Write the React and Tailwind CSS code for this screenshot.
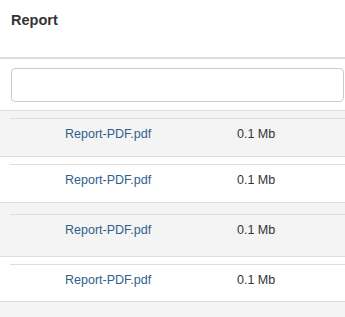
const files = [
  { name: 'Report-PDF.pdf', size: '0.1 Mb', row: 'h-[46px] bg-[#f4f4f4]', inner: 'mt-[7px]' },
  { name: 'Report-PDF.pdf', size: '0.1 Mb', row: 'h-[46px] bg-white', inner: 'mt-[7px]' },
  { name: 'Report-PDF.pdf', size: '0.1 Mb', row: 'h-[54px] bg-[#f4f4f4]', inner: 'mt-[11px]' },
  { name: 'Report-PDF.pdf', size: '0.1 Mb', row: 'h-[45px] bg-white', inner: 'mt-[7px]' },
]

const App = () => {
  return (
    <div className="w-[345px] h-[317px] overflow-hidden bg-[#f4f4f4] font-['Liberation_Sans',Arial,sans-serif] text-[#333]">
      {/* Header */}
      <div className="h-[59px] bg-white border-b-2 border-[#dcdcdc] px-[11px] pt-[10px]">
        <h2 className="text-[14.5px] leading-[20px] font-bold">Report</h2>
      </div>

      {/* Search */}
      <div className="bg-white pl-[11px] pr-[1px] pt-[9px] pb-[8px]">
        <input
          type="text"
          className="block w-full h-[34px] border border-[#cccccc] rounded-[4px] bg-white outline-none"
        />
      </div>

      {/* File rows */}
      <div>
        {files.map((f, i) => (
          <div key={i} className={`border-t border-[#dddddd] ${f.row}`}>
            <div className={`ml-[10px] border-t border-[#dddddd] flex pt-[6px] text-[12.5px] leading-[18px] ${f.inner}`}>
              <a href="#" className="ml-[55px] w-[172px] text-[#31608e]">{f.name}</a>
              <span>{f.size}</span>
            </div>
          </div>
        ))}
        <div className="border-t border-[#dddddd]"></div>
      </div>
    </div>
  )
}

export default App
